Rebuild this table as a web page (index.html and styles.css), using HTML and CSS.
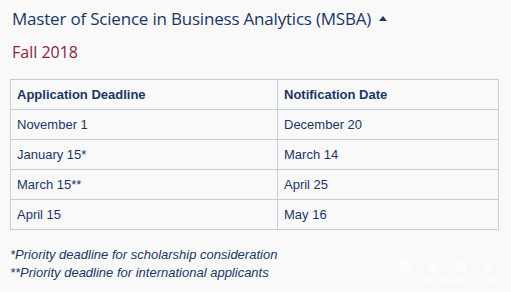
FILE: index.html
```html
<!DOCTYPE html>
<html>
<head>
<meta charset="utf-8">
<link rel="stylesheet" href="styles.css">
</head>
<body>
<div class="page">
  <h2 class="title">Master of Science in Business Analytics (MSBA) <span class="caret"></span></h2>
  <h3 class="term">Fall 2018</h3>
  <table class="dates">
    <thead>
      <tr><th>Application Deadline</th><th>Notification Date</th></tr>
    </thead>
    <tbody>
      <tr><td>November 1</td><td>December 20</td></tr>
      <tr><td>January 15*</td><td>March 14</td></tr>
      <tr><td>March 15**</td><td>April 25</td></tr>
      <tr><td>April 15</td><td>May 16</td></tr>
    </tbody>
  </table>
  <div class="notes">
    <p>*Priority deadline for scholarship consideration</p>
    <p>**Priority deadline for international applicants</p>
  </div>
  <div class="watermark">鑫 泉 留 学<br><span>xinquanedu.com</span></div>
</div>
</body>
</html>
```
FILE: styles.css
```css
html, body {
  margin: 0;
  padding: 0;
  background: #f9f9f9;
}
.page {
  position: relative;
  width: 511px;
  height: 292px;
  padding: 8px 10px 0 10px;
  box-sizing: border-box;
}
.title {
  margin: 0;
  font-family: "Open Sans", "Noto Sans", sans-serif;
  font-weight: 400;
  font-size: 17px;
  line-height: 22px;
  color: #1a3668;
  padding-left: 2px;
  letter-spacing: -0.2px;
}
.caret {
  display: inline-block;
  width: 0;
  height: 0;
  border-left: 4px solid transparent;
  border-right: 4px solid transparent;
  border-bottom: 5px solid #1a3668;
  vertical-align: middle;
  margin-left: 4px;
  position: relative;
  top: -2px;
}
.term {
  margin: 12px 0 0 0;
  font-family: "Open Sans", "Noto Sans", sans-serif;
  font-weight: 400;
  font-size: 16px;
  line-height: 20px;
  color: #8a1c3c;
  padding-left: 2px;
}
.dates {
  margin-top: 17px;
  width: 489px;
  border-collapse: collapse;
  font-family: "Liberation Sans", Arial, sans-serif;
  font-size: 13px;
  color: #1a3668;
}
.dates th, .dates td {
  border: 1px solid #c4cfd4;
  height: 30px;
  padding: 0 6px;
  text-align: left;
  box-sizing: border-box;
}
.dates th {
  font-weight: 700;
}
.dates th:first-child, .dates td:first-child {
  width: 267px;
}
.notes {
  margin-top: 16px;
  font-family: "Liberation Sans", Arial, sans-serif;
  font-style: italic;
  font-size: 13px;
  line-height: 18px;
  color: #1a3668;
}
.notes p {
  margin: 0;
}
.watermark {
  position: absolute;
  right: 10px;
  bottom: 4px;
  color: #ffffff;
  font-family: "Noto Sans CJK SC", sans-serif;
  font-size: 13px;
  letter-spacing: 6px;
  line-height: 14px;
  text-align: center;
}
.watermark span {
  font-family: "Liberation Mono", monospace;
  font-size: 11px;
  letter-spacing: 0;
}
```
